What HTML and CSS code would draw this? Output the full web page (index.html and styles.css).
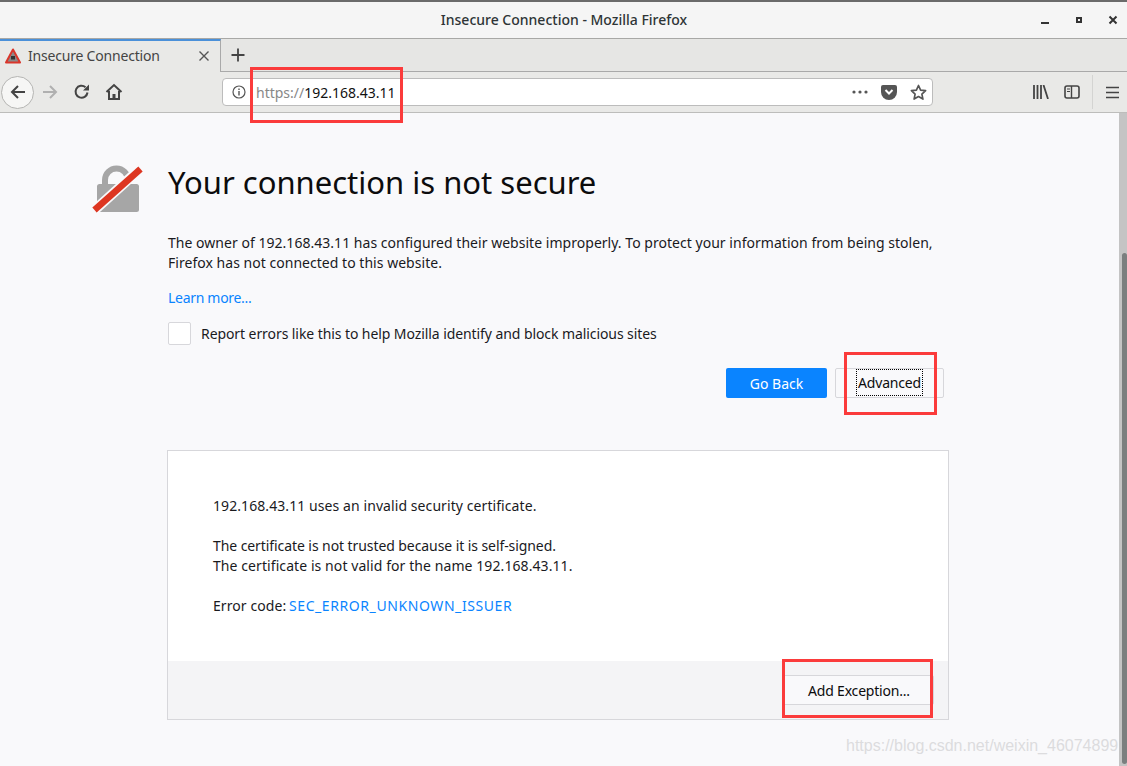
FILE: index.html
```html
<!DOCTYPE html>
<html>
	<head>
		<meta charset="utf-8" />
		<title>Insecure Connection - Mozilla Firefox</title>
		<link rel="stylesheet" href="styles.css">
	</head>
	<body>
		<div class="titlebar">
			<span class="title">Insecure Connection - Mozilla Firefox</span>
			<div class="win-buttons">
				<svg width="10" height="10" viewBox="0 0 10 10"><rect x="1" y="7" width="8" height="2" fill="#333"/></svg>
				<svg width="10" height="10" viewBox="0 0 10 10"><path d="M2 2h6v6h-6z M4 4v2h2v-2z" fill="#333" fill-rule="evenodd"/></svg>
				<svg width="10" height="10" viewBox="0 0 10 10"><path d="M1.5 1.5l7 7M8.500 1.500l-7 7" stroke="#333" stroke-width="2"/></svg>
			</div>
		</div>
		<div class="tabbar">
			<div class="tab">
				<svg class="tab-icon" width="16" height="16" viewBox="0 0 16 16">
					<path d="M8 1.500L15 14.500H1z" fill="#8a8a8a" stroke="#d9362b" stroke-width="2" stroke-linejoin="round"/>
					<rect x="6" y="8" width="4" height="3.500" fill="#333"/>
				</svg>
				<span class="tab-label">Insecure Connection</span>
				<svg class="tab-close" width="12" height="12" viewBox="0 0 12 12"><path d="M1.500 1.500l9 9M10.500 1.500l-9 9" stroke="#555" stroke-width="1.400"/></svg>
			</div>
			<div class="new-tab">
				<svg width="16" height="16" viewBox="0 0 16 16"><path d="M8 1.500v13M1.500 8h13" stroke="#444" stroke-width="1.800"/></svg>
			</div>
		</div>
		<div class="toolbar">
			<div class="back-btn">
				<svg width="18" height="18" viewBox="0 0 18 18"><path d="M16 9H3M9 3L3 9l6 6" fill="none" stroke="#444" stroke-width="2"/></svg>
			</div>
			<svg class="nav-forward" width="18" height="18" viewBox="0 0 18 18"><path d="M2 9h13M9 3l6 6-6 6" fill="none" stroke="#b0b0b0" stroke-width="2"/></svg>
			<svg class="nav-reload" width="18" height="18" viewBox="0 0 18 18"><path d="M14.500 9.500A6 6 0 1 1 12.500 4.200" fill="none" stroke="#444" stroke-width="2"/><path d="M16 1.500V7.500H10z" fill="#444"/></svg>
			<svg class="nav-home" width="18" height="18" viewBox="0 0 18 18"><path d="M1.500 9L9 2l7.500 7M4 8v8h10V8" fill="none" stroke="#444" stroke-width="2"/><rect x="7.500" y="11" width="3" height="5" fill="#444"/></svg>
			<div class="urlbar">
				<svg class="url-info" width="14" height="14" viewBox="0 0 14 14"><circle cx="7" cy="7" r="6" fill="none" stroke="#555" stroke-width="1.200"/><path d="M7 6v4.500M7 3.500v1.500" stroke="#555" stroke-width="1.400"/></svg>
				<span class="url"><span class="url-scheme">https://</span>192.168.43.11</span>
				<div class="url-actions">
					<svg width="16" height="4" viewBox="0 0 16 4"><circle cx="2" cy="2" r="1.600" fill="#555"/><circle cx="8" cy="2" r="1.600" fill="#555"/><circle cx="14" cy="2" r="1.600" fill="#555"/></svg>
					<svg width="16" height="15" viewBox="0 0 16 15"><path d="M2 0h12a2 2 0 0 1 2 2v5a8 8 0 0 1-16 0V2a2 2 0 0 1 2-2z" fill="#555"/><path d="M4.500 5L8 8.500 11.500 5" fill="none" stroke="#fff" stroke-width="2"/></svg>
					<svg width="17" height="17" viewBox="0 0 17 17"><path d="M8.500 1.500l2.100 4.600 5 .6-3.700 3.400 1 5-4.400-2.500-4.400 2.500 1-5L1.400 6.700l5-.6z" fill="none" stroke="#555" stroke-width="1.700" stroke-linejoin="round"/></svg>
				</div>
			</div>
			<div class="tools">
				<svg width="16" height="14" viewBox="0 0 16 14"><path d="M1 0v14M4.500 0v14M8 0v14M10.500 0l4.500 14" fill="none" stroke="#444" stroke-width="1.800"/></svg>
				<svg width="16" height="14" viewBox="0 0 16 14"><rect x="1" y="1" width="14" height="12" rx="2" fill="none" stroke="#444" stroke-width="1.600"/><path d="M7.500 1v12" stroke="#444" stroke-width="1.400"/><path d="M3 4h3M3 6.500h3" stroke="#444" stroke-width="1.200"/></svg>
				<div class="tools-sep"></div>
				<svg width="13" height="13" viewBox="0 0 13 13"><path d="M0 1.500h13M0 6.500h13M0 11.500h13" stroke="#444" stroke-width="1.700"/></svg>
			</div>
		</div>
		<div class="content">
			<div class="page">
				<div class="main">
					<svg class="lock" width="50" height="50" viewBox="0 0 50 50">
						<path d="M14 22v-6a11.500 11.500 0 0 1 23 0v6" fill="none" stroke="#a6a6a6" stroke-width="6"/>
						<rect x="6" y="20" width="42" height="28" rx="2.500" fill="#a6a6a6"/>
						<path d="M2 47.500L49.500 4.500" stroke="#f9f9fb" stroke-width="10"/>
						<path d="M3.500 46L49.500 5" stroke="#dd3621" stroke-width="6.500"/>
					</svg>
					<div class="text">
						<h1>Your connection is not secure</h1>
						<p class="desc">The owner of 192.168.43.11 has configured their website improperly. To protect your information from being stolen, Firefox has not connected to this website.</p>
						<a class="learn">Learn more...</a>
						<div class="report">
							<span class="check"></span>
							<span class="report-label">Report errors like this to help Mozilla identify and block malicious sites</span>
						</div>
						<div class="actions">
							<button class="btn primary">Go Back</button>
							<button class="btn plain"><span class="focus">Advanced</span></button>
						</div>
						<div class="panel">
							<div class="panel-body">
								<p>192.168.43.11 uses an invalid security certificate.</p>
								<p><span class="tight">The certificate is not trusted because it is self-signed.</span><br>The certificate is not valid for the name 192.168.43.11.</p>
								<p>Error code: <a class="code">SEC_ERROR_UNKNOWN_ISSUER</a></p>
							</div>
							<div class="panel-foot">
								<button class="btn exception">Add Exception...</button>
							</div>
						</div>
					</div>
				</div>
			</div>
			<div class="scrollbar"><div class="thumb"></div></div>
		</div>
		<div class="mark mark-url"></div>
		<div class="mark mark-adv"></div>
		<div class="mark mark-exc"></div>
		<div class="watermark">https://blog.csdn.net/weixin_46074899</div>
	</body>
</html>
```
FILE: styles.css
```css
html {
	height: 100%;
}
body {
	margin: 0;
	height: 766px;
	overflow: hidden;
	display: flex;
	flex-direction: column;
	font-family: 'Noto Sans', sans-serif;
	font-size: 14px;
	color: #1a1a1e;
	background-color: #f9f9fb;
}
.titlebar {
	height: 36px;
	flex: none;
	border-top: 2px solid #6b6b6b;
	border-bottom: 1px solid #a8a8a6;
	background-color: #f5f5f5;
	display: flex;
	align-items: center;
	justify-content: center;
	position: relative;
}
.title {
	font-weight: 500;
	font-size: 14px;
	color: #2e3436;
	margin: -2px 0 0 1px;
}
.win-buttons {
	position: absolute;
	right: 9px;
	top: 13px;
	display: flex;
	gap: 24px;
}
.tabbar {
	height: 32px;
	flex: none;
	display: flex;
	background-color: #e6e6e4;
	border-bottom: 1px solid #a9a9a9;
}
.tab {
	width: 221px;
	height: 33px;
	box-sizing: border-box;
	border-top: 2px solid #4a90d9;
	background-color: #e9e9e7;
	border-right: 1px solid #a9a9a9;
	display: flex;
	align-items: center;
	padding: 0 10px 2px 5px;
	gap: 7px;
	font-size: 14px;
	color: #444;
}
.tab-label {
	flex: 1;
	letter-spacing: -0.2px;
}
.new-tab {
	width: 33px;
	display: flex;
	align-items: center;
	justify-content: center;
}
.toolbar {
	height: 40px;
	flex: none;
	display: flex;
	align-items: center;
	background-color: #e9e9e7;
	border-bottom: 1px solid #bdbdbb;
}
.back-btn {
	width: 31px;
	height: 31px;
	margin-left: 1px;
	border: 1px solid #b5b5b3;
	border-radius: 50%;
	background-color: #f6f6f5;
	display: flex;
	align-items: center;
	justify-content: center;
}
.nav-forward {
	margin-left: 7px;
}
.nav-reload {
	margin-left: 14px;
}
.nav-home {
	margin-left: 14px;
}
.urlbar {
	margin-left: 99px;
	width: 711px;
	height: 28px;
	display: flex;
	align-items: center;
	background-color: #fff;
	border: 1px solid #bcbcbc;
	border-radius: 4px;
	padding: 0 5px 0 9px;
	box-sizing: border-box;
}
.url-info {
	margin-right: 10px;
}
.url {
	flex: 1;
	font-size: 14px;
	color: #111;
}
.url-scheme {
	color: #888;
}
.url-actions {
	display: flex;
	align-items: center;
	gap: 13px;
}
.tools {
	margin-left: 100px;
	display: flex;
	align-items: center;
	gap: 15px;
}
.tools-sep {
	width: 1px;
	height: 34px;
	margin: 0 -2px 0 -3px;
	background-color: #d4d4d2;
}
.content {
	flex: 1;
	display: flex;
	min-height: 0;
}
.page {
	flex: 1;
	min-width: 0;
}
.main {
	display: flex;
	padding: 49px 0 0 91px;
}
.lock {
	flex: none;
	margin: 2px 27px 0 0;
	overflow: visible;
}
.text {
	width: 781px;
}
h1 {
	margin: 0;
	font-size: 31px;
	font-weight: 400;
	line-height: 40px;
	color: #0c0c0d;
}
.desc {
	margin: 31px 0 0;
	line-height: 20px;
	font-size: 14px;
	letter-spacing: 0.03px;
}
.learn {
	display: block;
	margin-top: 15px;
	line-height: 20px;
	letter-spacing: -0.3px;
	color: #0a84ff;
}
.report {
	display: flex;
	align-items: center;
	gap: 10px;
	margin-top: 14px;
}
.report-label {
	letter-spacing: -0.08px;
}
.check {
	width: 23px;
	height: 23px;
	box-sizing: border-box;
	background-color: #fff;
	border: 1px solid #d7d7db;
	border-radius: 2px;
}
.actions {
	display: flex;
	justify-content: flex-end;
	gap: 8px;
	margin-top: 23px;
	padding-right: 5px;
}
.btn {
	font-family: inherit;
	font-size: 14px;
	height: 30px;
	border-radius: 2px;
	padding: 0;
}
.primary {
	width: 101px;
	border: none;
	background-color: #0a84ff;
	color: #fff;
}
.plain {
	width: 109px;
	border: 1px solid #d7d7db;
	background-color: #f9f9fb;
	color: #0c0c0d;
}
.focus {
	border: 1px dotted #000;
	padding: 3px 1px;
	line-height: 20px;
	letter-spacing: -0.2px;
}
.panel {
	margin: 52px 0 0 -1px;
	height: 270px;
	box-sizing: border-box;
	background-color: #fff;
	border: 1px solid #d7d7db;
	display: flex;
	flex-direction: column;
}
.panel-body {
	flex: 1;
	padding: 45px 45px 0;
	line-height: 20px;
	letter-spacing: 0.08px;
}
.panel-body p {
	margin: 0 0 20px;
}
.tight {
	letter-spacing: -0.08px;
}
.code {
	color: #0a84ff;
	letter-spacing: 0.58px;
	margin-left: -1px;
}
.panel-foot {
	height: 58px;
	flex: none;
	display: flex;
	align-items: center;
	justify-content: flex-end;
	background-color: #f4f4f6;
}
.exception {
	width: 152px;
	height: 30px;
	padding-left: 2px;
	margin-right: 14px;
	letter-spacing: -0.2px;
	border: 1px solid #d7d7db;
	background-color: #f9f9fb;
	color: #0c0c0d;
}
.scrollbar {
	width: 8px;
	flex: none;
	background-color: #c4c4c4;
	box-sizing: border-box;
	padding-left: 3px;
}
.thumb {
	margin-top: 140px;
	height: 511px;
	border-radius: 3px;
	background-color: #7b7f7f;
}
/* the red boxes drawn over the screenshot */
.mark {
	position: absolute;
	border: 3px solid #fb3b3b;
	box-sizing: border-box;
}
.mark-url {
	left: 250px;
	top: 67px;
	width: 153px;
	height: 56px;
}
.mark-adv {
	left: 844px;
	top: 352px;
	width: 93px;
	height: 63px;
}
.mark-exc {
	left: 782px;
	top: 659px;
	width: 151px;
	height: 59px;
}
.watermark {
	position: absolute;
	left: 846px;
	top: 737px;
	font-family: 'Liberation Sans', sans-serif;
	font-size: 16px;
	color: #dcdcde;
	white-space: nowrap;
}
```
